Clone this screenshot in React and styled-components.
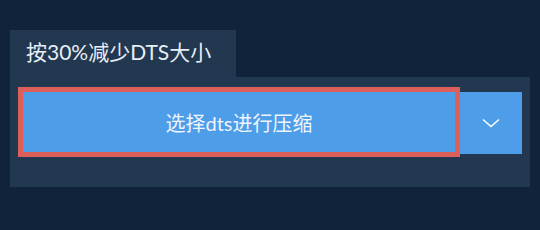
import React from 'react';
import styled, { createGlobalStyle } from 'styled-components';

const GlobalStyle = createGlobalStyle`
  html, body {
    margin: 0;
    padding: 0;
    background: #10233a;
    font-family: Lato, "Noto Sans CJK SC", sans-serif;
  }
`;

const Page = styled.div`
  padding: 30px 10px 0 10px;
  width: 520px;
`;

const Tab = styled.div`
  display: flex;
  align-items: center;
  width: 226px;
  height: 47px;
  box-sizing: border-box;
  padding-left: 16px;
  padding-bottom: 6px;
  background: #223750;
  color: #e8eef5;
  font-size: 21px;
  white-space: nowrap;
`;

const Panel = styled.div`
  display: flex;
  align-items: flex-start;
  height: 110px;
  box-sizing: border-box;
  padding: 15px 8px 0 13px;
  background: #223750;
`;

const MainButton = styled.button`
  width: 432px;
  height: 60px;
  border: none;
  outline: 5px solid #dc5f5a;
  background: #4d9de8;
  color: #eef4fb;
  font-family: Lato, "Noto Sans CJK SC", sans-serif;
  font-size: 20px;
  cursor: pointer;
  padding: 0;
`;

const DropButton = styled.button`
  display: flex;
  align-items: center;
  justify-content: center;
  width: 62px;
  height: 62px;
  margin-left: 5px;
  border: none;
  background: #4d9de8;
  padding: 0;
  cursor: pointer;
`;

const App = () => {
  return (
    <>
      <GlobalStyle />
      <Page>
        <Tab>按30%减少DTS大小</Tab>
        <Panel>
          <MainButton>选择dts进行压缩</MainButton>
          <DropButton>
            <svg width="18" height="10" viewBox="0 0 18 10">
              <path d="M1 1.5 L9 8.5 L17 1.5" fill="none" stroke="#ffffff" strokeWidth="1.5" />
            </svg>
          </DropButton>
        </Panel>
      </Page>
    </>
  );
};

export default App;
